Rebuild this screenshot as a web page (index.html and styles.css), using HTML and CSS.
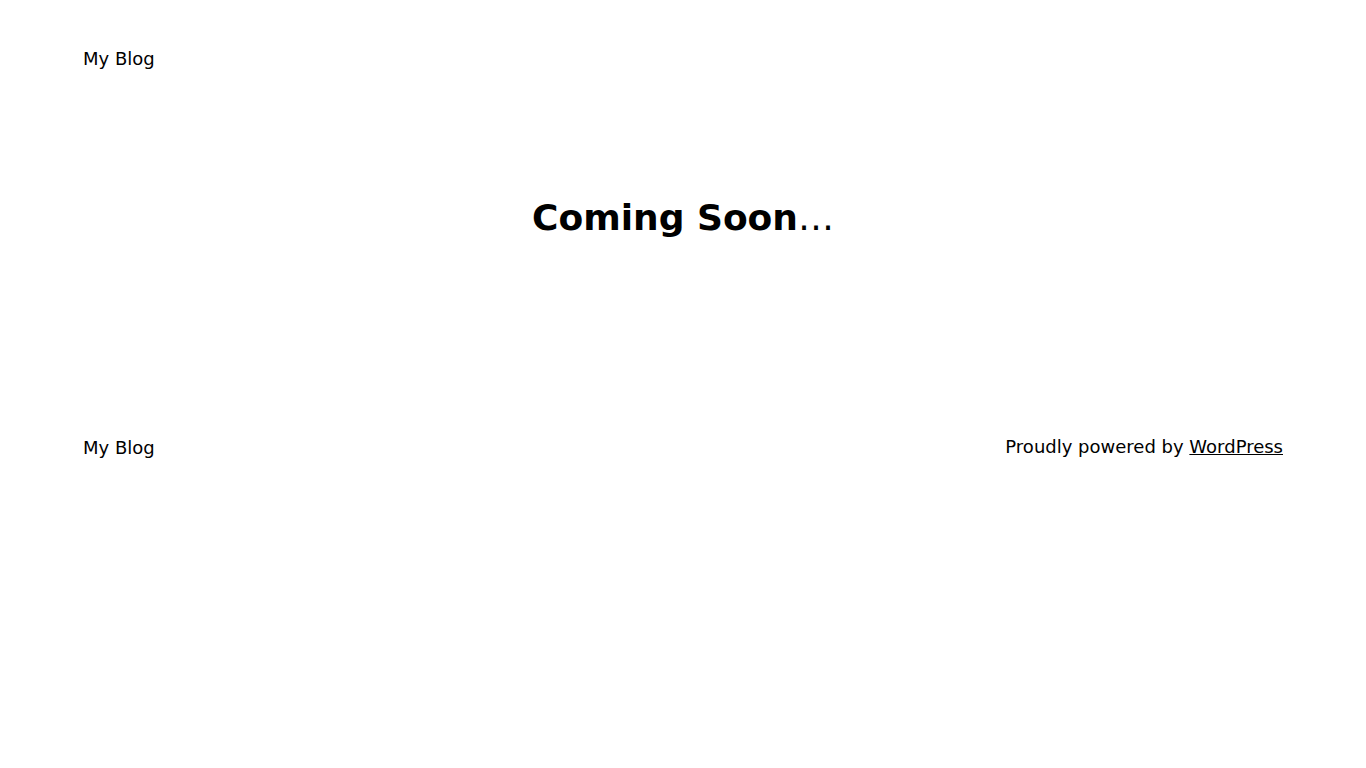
FILE: index.html
```html
<!DOCTYPE html>
<html lang="en">
<head>
<meta charset="utf-8">
<title>My Blog</title>
<link rel="stylesheet" href="styles.css">
</head>
<body>
<header class="site-header">
  <div class="wrap">
    <p class="site-title">My Blog</p>
  </div>
</header>
<main class="site-main">
  <h1 class="coming">Coming Soon<span class="ellipsis">…</span></h1>
</main>
<footer class="site-footer">
  <div class="wrap footer-row">
    <p class="site-title">My Blog</p>
    <p class="credit">Proudly powered by <a href="#">WordPress</a></p>
  </div>
</footer>
</body>
</html>
```
FILE: styles.css
```css
html, body {
  margin: 0;
  padding: 0;
  background: #fff;
  color: #000;
  font-family: "DejaVu Sans", sans-serif;
}
.wrap {
  max-width: 1200px;
  margin: 0 auto;
}
.site-header {
  padding-top: 45px;
}
.site-title {
  margin: 0;
  font-size: 18px;
  line-height: 28px;
}
.site-main {
  padding-top: 123px;
  height: 238px;
  box-sizing: content-box;
}
.coming {
  margin: 0;
  text-align: center;
  font-size: 36px;
  line-height: 44px;
  font-weight: 700;
}
.ellipsis {
  font-weight: 400;
}
.footer-row {
  display: flex;
  justify-content: space-between;
  align-items: flex-start;
}
.credit {
  margin: 0;
  font-size: 18px;
  line-height: 26px;
}
.credit a {
  color: #000;
  text-decoration: underline;
}
```
